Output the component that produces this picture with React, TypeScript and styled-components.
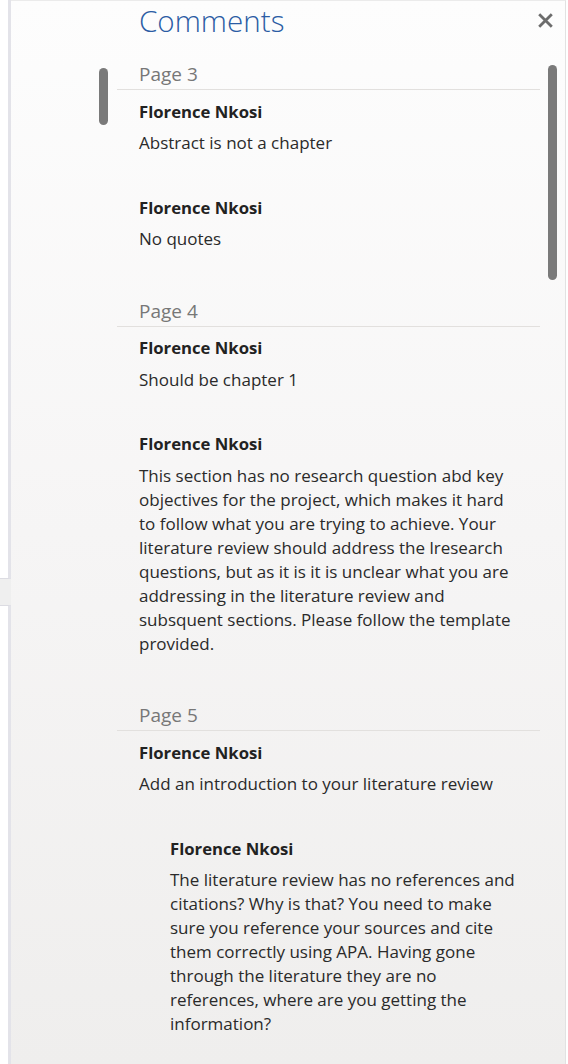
import React from "react";
import styled, { createGlobalStyle } from "styled-components";

const GlobalStyle = createGlobalStyle`
  html, body {
    margin: 0;
    padding: 0;
    background: #ffffff;
  }
  body {
    font-family: "Open Sans", "Noto Sans", "DejaVu Sans", sans-serif;
    -webkit-font-smoothing: antialiased;
  }
`;

const Shell = styled.div`
  display: flex;
  width: 568px;
  height: 1064px;
  overflow: hidden;
  background: #ffffff;
`;

const DocEdge = styled.div`
  width: 11px;
  flex: none;
  display: flex;
  flex-direction: column;
  gap: 26px;
  background: #efefef;
`;

const DocPage = styled.div<{ $first?: boolean }>`
  background: #ffffff;
  box-sizing: border-box;
  border-right: 3px solid #e3e3e9;
  ${(p) =>
    p.$first
      ? `height: 579px; border-bottom: 1px solid #dcdce2;`
      : `flex: 1; border-top: 1px solid #dcdce2;`}
`;

const Pane = styled.aside`
  position: relative;
  flex: 1;
  margin-right: 2px;
  box-sizing: border-box;
  border-top: 1px solid #ebebeb;
  border-right: 1px solid #e2e2e2;
  background: linear-gradient(180deg, #fdfdfd 0%, #f6f5f5 50%, #efeeed 100%);
  display: flex;
  flex-direction: column;
`;

const Header = styled.header`
  height: 40px;
  padding-left: 128px;
  display: flex;
  align-items: center;
`;

const Title = styled.h1`
  margin: 0;
  font-size: 29.6px;
  line-height: 40px;
  font-weight: 300;
  color: #2b5ca4;
`;

const CloseButton = styled.button`
  position: absolute;
  top: 12px;
  right: 12px;
  width: 15px;
  height: 15px;
  padding: 0;
  border: none;
  background: transparent;
  display: flex;
`;

const Thumb = styled.div<{ $side: "left" | "right" }>`
  position: absolute;
  width: 9px;
  border-radius: 5px;
  background: #7a7a7a;
  ${(p) =>
    p.$side === "left"
      ? `left: 88px; top: 67px; height: 57px;`
      : `right: 8px; top: 64px; height: 215px;`}
`;

const List = styled.div`
  margin-top: 19px;
  padding: 0 25px 0 106px;
  display: flex;
  flex-direction: column;
  gap: 45.5px;
`;

const Section = styled.section`
  display: flex;
  flex-direction: column;
`;

const PageLabel = styled.div`
  padding-left: 22px;
  font-size: 19px;
  line-height: 29px;
  color: #777777;
  border-bottom: 1px solid #e2e0de;
`;

const Comments = styled.div`
  padding: 9.5px 0 0 22px;
  display: flex;
  flex-direction: column;
  gap: 40.5px;
`;

const Comment = styled.article<{ $reply?: boolean }>`
  margin-left: ${(p) => (p.$reply ? "31px" : "0")};
  display: flex;
  flex-direction: column;
  gap: 7.5px;
`;

const Author = styled.div`
  font-size: 16.7px;
  line-height: 24px;
  font-weight: 700;
  color: #222222;
`;

const Body = styled.div`
  font-size: 17px;
  line-height: 24px;
  color: #2a2a2a;
`;

const Line = styled.span`
  display: block;
  white-space: nowrap;
`;

type CommentData = { lines: string[]; reply?: boolean };
type PageData = { page: number; comments: CommentData[] };

const AUTHOR = "Florence Nkosi";

const pages: PageData[] = [
  {
    page: 3,
    comments: [
      { lines: ["Abstract is not a chapter"] },
      { lines: ["No quotes"] },
    ],
  },
  {
    page: 4,
    comments: [
      { lines: ["Should be chapter 1"] },
      {
        lines: [
          "This section has no research question abd key",
          "objectives for the project, which makes it hard",
          "to follow what you are trying to achieve. Your",
          "literature review should address the lresearch",
          "questions, but as it is it is unclear what you are",
          "addressing in the literature review and",
          "subsquent sections. Please follow the template",
          "provided.",
        ],
      },
    ],
  },
  {
    page: 5,
    comments: [
      { lines: ["Add an introduction to your literature review"] },
      {
        reply: true,
        lines: [
          "The literature review has no references and",
          "citations? Why is that? You need to make",
          "sure you reference your sources and cite",
          "them correctly using APA. Having gone",
          "through the literature they are no",
          "references, where are you getting the",
          "information?",
        ],
      },
    ],
  },
];

const CloseIcon = () => (
  <svg width="15" height="15" viewBox="0 0 15 15" aria-hidden="true">
    <path
      d="M2.2 2.2 L12.8 12.8 M12.8 2.2 L2.2 12.8"
      stroke="#6c6c6c"
      strokeWidth="2.8"
      strokeLinecap="square"
      fill="none"
    />
  </svg>
);

export default function App() {
  return (
    <>
      <GlobalStyle />
      <Shell>
        <DocEdge>
          <DocPage $first />
          <DocPage />
        </DocEdge>
        <Pane>
          <Header>
            <Title>Comments</Title>
          </Header>
          <CloseButton aria-label="Close">
            <CloseIcon />
          </CloseButton>
          <Thumb $side="left" />
          <Thumb $side="right" />
          <List>
            {pages.map((pg) => (
              <Section key={pg.page}>
                <PageLabel>Page {pg.page}</PageLabel>
                <Comments>
                  {pg.comments.map((c, i) => (
                    <Comment key={i} $reply={c.reply}>
                      <Author>{AUTHOR}</Author>
                      <Body>
                        {c.lines.map((l, j) => (
                          <Line key={j}>{l}</Line>
                        ))}
                      </Body>
                    </Comment>
                  ))}
                </Comments>
              </Section>
            ))}
          </List>
        </Pane>
      </Shell>
    </>
  );
}
